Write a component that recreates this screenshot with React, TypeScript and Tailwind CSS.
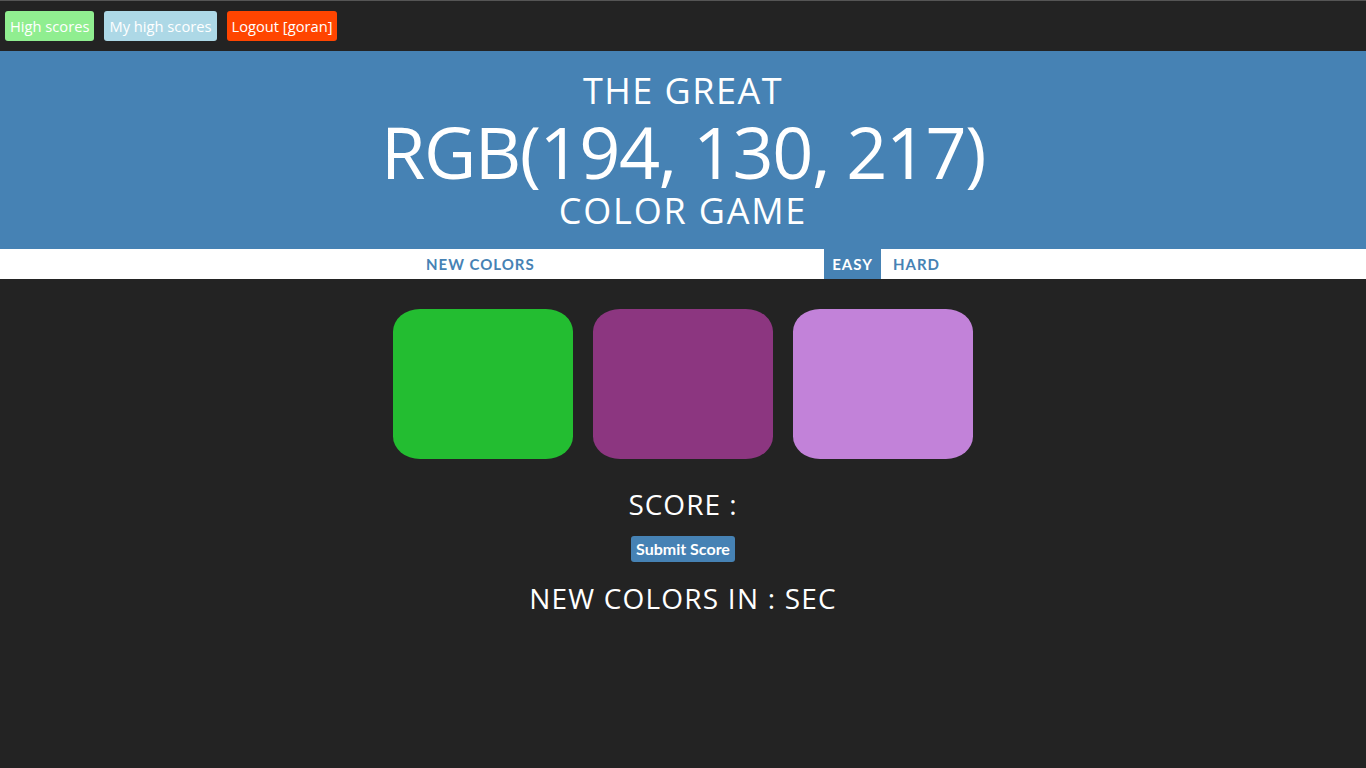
import React from "react";

export default function App() {
  const colors = ["#23bd31", "#8c3680", "#c282d9"];
  return (
    <div className="min-h-[768px] bg-[#232323] border-t border-[#555]" style={{ fontFamily: '"Open Sans", sans-serif' }}>
      <div className="flex items-center gap-[10px] h-[50px] px-[5px]">
        <button className="h-[30px] px-[5px] rounded-[3px] bg-[#90ee90] text-white text-[14.7px]">High scores</button>
        <button className="h-[30px] px-[5px] rounded-[3px] bg-[#add8e6] text-white text-[14.7px]">My high scores</button>
        <button className="h-[30px] px-[5px] rounded-[3px] bg-[#ff4500] text-white text-[14.7px]">Logout [goran]</button>
      </div>
      <div className="bg-[#4682b4] h-[198px] flex flex-col items-center text-white uppercase">
        <div className="text-[36px] leading-[36px] mt-[22px] tracking-[1.5px]">The Great</div>
        <div className="text-[72px] leading-[80px] mt-[2px] tracking-[-1.5px]">RGB(194, 130, 217)</div>
        <div className="text-[36px] leading-[36px] mt-[2px] tracking-[1.8px]">Color Game</div>
      </div>
      <div className="bg-white h-[30px] flex justify-center" style={{ fontFamily: 'Lato, sans-serif' }}>
        <div className="w-[600px] flex items-stretch text-[15px] font-bold tracking-[1px] text-[#4682b4]">
          <button className="uppercase px-[9px] ml-[34px]">New Colors</button>
          <div className="flex-1" />
          <button className="uppercase w-[57px] bg-[#4682b4] text-white">Easy</button>
          <button className="uppercase w-[71px] pl-[12px] text-left mr-[31px]">Hard</button>
        </div>
      </div>
      <div className="flex justify-center gap-[20px] mt-[30px]">
        {colors.map((c) => (
          <div key={c} className="w-[180px] h-[150px] rounded-[15%]" style={{ backgroundColor: c }} />
        ))}
      </div>
      <div className="flex flex-col items-center text-white uppercase">
        <div className="text-[28px] leading-[32px] mt-[29px] tracking-[1px]">Score :</div>
        <button className="mt-[16px] h-[26px] px-[5px] rounded-[3px] bg-[#4682b4] text-white text-[16px] font-bold" style={{ fontFamily: 'Lato, sans-serif' }}>Submit Score</button>
        <div className="text-[28px] leading-[32px] mt-[20px] tracking-[1.2px]">New Colors In : Sec</div>
      </div>
    </div>
  );
}
